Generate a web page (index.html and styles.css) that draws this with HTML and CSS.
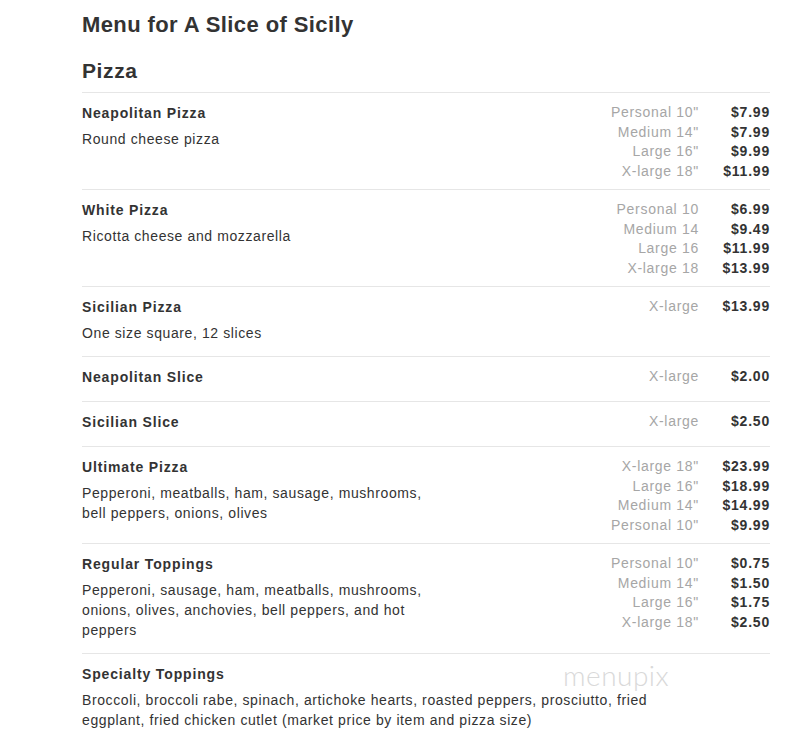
FILE: index.html
```html
<!DOCTYPE html>
<html>
<head>
<meta charset="utf-8">
<link rel="stylesheet" href="styles.css">
</head>
<body>
<div class="page">
  <h1 class="title">Menu for A Slice of Sicily</h1>
  <h2 class="section">Pizza</h2>
  <div class="items">
    <div class="item">
      <div class="info">
        <div class="name">Neapolitan Pizza</div>
        <div class="desc">Round cheese pizza</div>
      </div>
      <div class="prices">
        <span class="size">Personal 10"</span><span class="price">$7.99</span>
        <span class="size">Medium 14"</span><span class="price">$7.99</span>
        <span class="size">Large 16"</span><span class="price">$9.99</span>
        <span class="size">X-large 18"</span><span class="price">$11.99</span>
      </div>
    </div>
    <div class="item">
      <div class="info">
        <div class="name">White Pizza</div>
        <div class="desc">Ricotta cheese and mozzarella</div>
      </div>
      <div class="prices">
        <span class="size">Personal 10</span><span class="price">$6.99</span>
        <span class="size">Medium 14</span><span class="price">$9.49</span>
        <span class="size">Large 16</span><span class="price">$11.99</span>
        <span class="size">X-large 18</span><span class="price">$13.99</span>
      </div>
    </div>
    <div class="item">
      <div class="info">
        <div class="name">Sicilian Pizza</div>
        <div class="desc">One size square, 12 slices</div>
      </div>
      <div class="prices">
        <span class="size">X-large</span><span class="price">$13.99</span>
      </div>
    </div>
    <div class="item">
      <div class="info">
        <div class="name">Neapolitan Slice</div>
      </div>
      <div class="prices">
        <span class="size">X-large</span><span class="price">$2.00</span>
      </div>
    </div>
    <div class="item">
      <div class="info">
        <div class="name">Sicilian Slice</div>
      </div>
      <div class="prices">
        <span class="size">X-large</span><span class="price">$2.50</span>
      </div>
    </div>
    <div class="item">
      <div class="info">
        <div class="name">Ultimate Pizza</div>
        <div class="desc">Pepperoni, meatballs, ham, sausage, mushrooms, bell peppers, onions, olives</div>
      </div>
      <div class="prices">
        <span class="size">X-large 18"</span><span class="price">$23.99</span>
        <span class="size">Large 16"</span><span class="price">$18.99</span>
        <span class="size">Medium 14"</span><span class="price">$14.99</span>
        <span class="size">Personal 10"</span><span class="price">$9.99</span>
      </div>
    </div>
    <div class="item">
      <div class="info">
        <div class="name">Regular Toppings</div>
        <div class="desc">Pepperoni, sausage, ham, meatballs, mushrooms, onions, olives, anchovies, bell peppers, and hot peppers</div>
      </div>
      <div class="prices">
        <span class="size">Personal 10"</span><span class="price">$0.75</span>
        <span class="size">Medium 14"</span><span class="price">$1.50</span>
        <span class="size">Large 16"</span><span class="price">$1.75</span>
        <span class="size">X-large 18"</span><span class="price">$2.50</span>
      </div>
    </div>
    <div class="item item-wide">
      <div class="info">
        <div class="name">Specialty Toppings</div>
        <div class="desc">Broccoli, broccoli rabe, spinach, artichoke hearts, roasted peppers, prosciutto, fried eggplant, fried chicken cutlet (market price by item and pizza size)</div>
      </div>
      <div class="watermark">menupix</div>
    </div>
  </div>
</div>
</body>
</html>
```

FILE: styles.css
```css
html, body {
  margin: 0;
  padding: 0;
  background: #fff;
}
body {
  font-family: "Liberation Sans", Arial, sans-serif;
  color: #333;
}
.page {
  width: 688px;
  margin-left: 82px;
  padding-top: 12px;
}
.title {
  font-size: 22px;
  line-height: 26px;
  font-weight: bold;
  letter-spacing: 0.4px;
  margin: 0 0 20px 0;
  color: #333;
}
.section {
  font-size: 21px;
  line-height: 26px;
  font-weight: bold;
  letter-spacing: 0.6px;
  margin: 0 0 8px 0;
  color: #333;
}
.item {
  display: flex;
  justify-content: space-between;
  border-top: 1px solid #e6e6e6;
  padding: 10px 0 8px 0;
  position: relative;
}
.info {
  width: 356px;
}
.name {
  font-size: 14px;
  font-weight: bold;
  letter-spacing: 0.85px;
  line-height: 20px;
  margin-bottom: 6px;
  color: #333;
}
.desc {
  font-size: 14px;
  letter-spacing: 0.6px;
  line-height: 20px;
  margin-bottom: 5px;
  color: #333;
}
.item-wide .info {
  width: 600px;
}
.prices {
  display: grid;
  grid-template-columns: auto 59px;
  column-gap: 12px;
  font-size: 14px;
  line-height: 19.5px;
  text-align: right;
  align-content: start;
}
.size {
  color: #a6a6a6;
  letter-spacing: 0.7px;
}
.price {
  font-weight: bold;
  letter-spacing: 0.8px;
  color: #333;
}
.watermark {
  position: absolute;
  left: 481px;
  top: 4px;
  font-family: "Lato", "Open Sans", sans-serif;
  font-weight: 300;
  font-size: 28px;
  letter-spacing: 0.5px;
  color: #d9d9d9;
}
```
